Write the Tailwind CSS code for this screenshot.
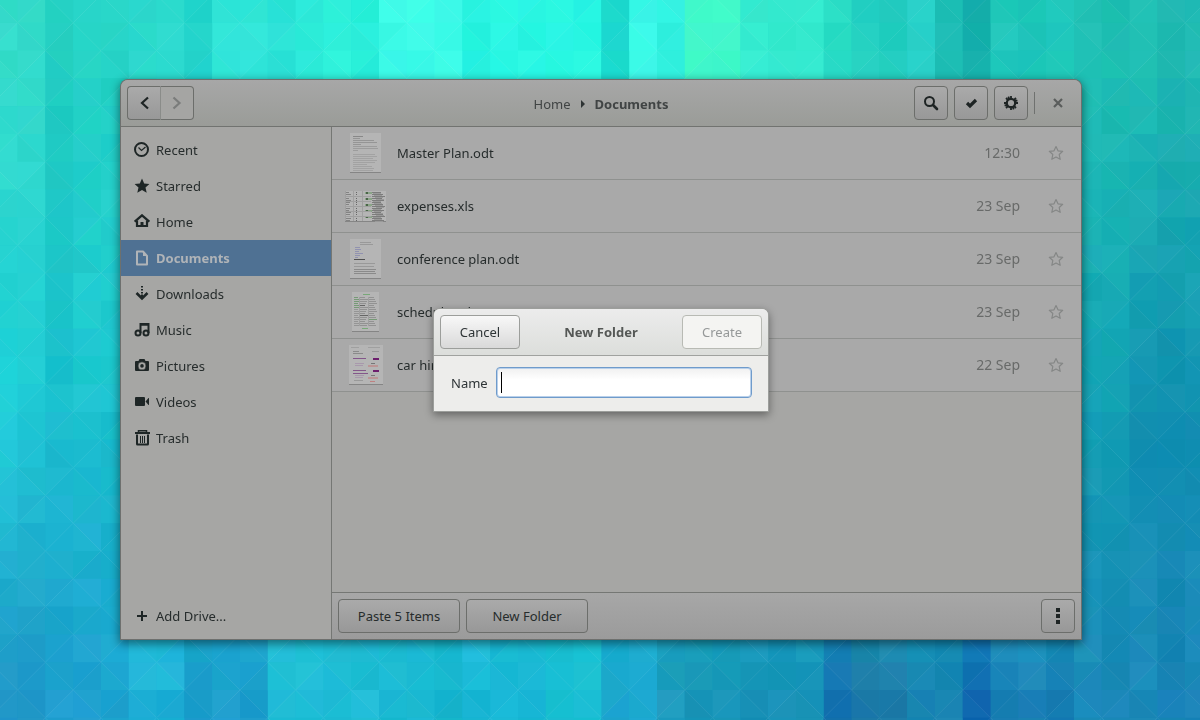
<!DOCTYPE html>
<html lang="en">

<head>
    <meta charset="UTF-8">
    <meta name="viewport" content="width=device-width, initial-scale=1.0">
    <title>Documents</title>
    <script src="https://cdn.jsdelivr.net/npm/@tailwindcss/browser@4"></script>
</head>

<body class="bg-[#1fb8cc] font-['Noto_Sans','Open_Sans',sans-serif] text-[13px] leading-5 text-[#262c2c]">
    <!-- wallpaper, filled in by drawWallpaper() -->
    <svg id="wallpaper" class="fixed inset-0 w-full h-full -z-10" viewBox="0 0 1200 720" preserveAspectRatio="xMidYMid slice" aria-hidden="true"></svg>

    <main class="min-h-screen flex pt-20 pb-[81px] pl-[121px] pr-[119px]">
        <div class="relative flex-1 flex flex-col rounded-t-[7px] bg-[#a6a6a4] shadow-[0_0_0_1px_#6e706e,0_3px_10px_2px_rgba(0,0,0,0.45)]">

            <header class="grid grid-cols-[1fr_auto_1fr] items-center p-1.5 rounded-t-[7px] border-b border-[#717370] bg-linear-to-b from-[#a7a7a7] to-[#9a9c98]">
                <div class="flex">
                    <button type="button" aria-label="Back" class="w-[34px] h-[34px] flex items-center justify-center rounded-l border border-[#6c6e6b] border-r-[#8a8c89] bg-linear-to-b from-[#aaaaaa] to-[#989898]">
                        <svg class="w-4 h-4" viewBox="0 0 16 16" fill="none" stroke="#1e2424" stroke-width="2.2"><path d="M12 2.500 6 8l6 5.500" /></svg>
                    </button>
                    <button type="button" aria-label="Forward" disabled class="w-[33px] h-[34px] flex items-center justify-center rounded-r border border-l-0 border-[#6c6e6b] bg-[#a5a5a3]">
                        <svg class="w-4 h-4" viewBox="0 0 16 16" fill="none" stroke="#7a7c7b" stroke-width="2.2"><path d="m4.500 2.500 6 5.500-6 5.500" /></svg>
                    </button>
                </div>
                <nav class="flex items-center gap-2 pt-0.5 text-[#404444]">
                    <a href="#">Home</a>
                    <svg class="w-2 h-2" viewBox="0 0 8 8" fill="#2e3434"><path d="M2 0v8l4-4z" /></svg>
                    <a href="#" class="font-bold">Documents</a>
                </nav>
                <div class="flex items-center justify-end gap-1.5">
                    <button type="button" aria-label="Search" class="w-[34px] h-[34px] flex items-center justify-center rounded border border-[#6c6e6b] bg-linear-to-b from-[#aaaaaa] to-[#989898]">
                        <svg class="w-4 h-4" viewBox="0 0 16 16" fill="none" stroke="#1e2424"><circle cx="6.500" cy="6.500" r="4.500" stroke-width="2" /><path d="m10 10 4 4" stroke-width="2.600" stroke-linecap="round" /></svg>
                    </button>
                    <button type="button" aria-label="Select" class="w-[34px] h-[34px] flex items-center justify-center rounded border border-[#6c6e6b] bg-linear-to-b from-[#aaaaaa] to-[#989898]">
                        <svg class="w-4 h-4" viewBox="0 0 16 16" fill="none" stroke="#1e2424" stroke-width="3.200"><path d="m4 8 3 3 6-6" /></svg>
                    </button>
                    <button type="button" aria-label="Settings" class="w-[34px] h-[34px] flex items-center justify-center rounded border border-[#6c6e6b] bg-linear-to-b from-[#aaaaaa] to-[#989898]">
                        <svg class="w-4 h-4" viewBox="0 0 16 16" fill="none" stroke="#1e2424"><circle cx="8" cy="8" r="4.200" stroke-width="2.200" /><path d="M8 1v3M8 12v3M1 8h3M12 8h3M3 3l2 2M11 11l2 2M13 3l-2 2M5 11l-2 2M5.300 1.600l.9 2.200M9.800 12.200l.9 2.200M1.600 10.700l2.200-.9M12.200 6.200l2.200-.9" stroke-width="1.800" /></svg>
                    </button>
                    <span class="w-px h-[22px] bg-[#6f716f]"></span>
                    <button type="button" aria-label="Close" class="w-[34px] h-[34px] flex items-center justify-center">
                        <svg class="w-4 h-4" viewBox="0 0 16 16" fill="none" stroke="#5a5d5c" stroke-width="2.200"><path d="m4 4 8 8M12 4l-8 8" /></svg>
                    </button>
                </div>
            </header>

            <div class="flex-1 flex">
                <aside class="w-[211px] flex flex-col py-[5px] border-r border-[#757774]">
                    <a href="#" class="h-9 flex items-center gap-1.5 pl-[13px]">
                        <svg class="w-4 h-4" viewBox="0 0 16 16" fill="none" stroke="#1e2626"><circle cx="7.500" cy="7.500" r="6.500" stroke-width="2" /><path d="m4.500 5.500 3 3 4-3.500" stroke-width="1.200" /></svg>
                        Recent
                    </a>
                    <a href="#" class="h-9 flex items-center gap-1.5 pl-[13px]">
                        <svg class="w-4 h-4" viewBox="0 0 16 16" fill="#1e2626"><path d="m8 .500 2.200 4.900 5.200.5-3.900 3.500L12.700 14.800 8 12l-4.700 2.800 1.200-5.400L.600 5.900l5.200-.5z" /></svg>
                        Starred
                    </a>
                    <a href="#" class="h-9 flex items-center gap-1.5 pl-[13px]">
                        <svg class="w-4 h-4" viewBox="0 0 16 16" fill="none" stroke="#1e2626" stroke-width="2.200"><path d="M.7 7.700 8 1.300l7.300 6.400" /><path d="M3 6.500V12h10V6.500" /><path d="M8 12V8" stroke-width="3" /></svg>
                        Home
                    </a>
                    <a href="#" class="h-9 flex items-center gap-1.5 pl-[13px] bg-[#4f7193] font-bold text-[#b0b4b8]">
                        <svg class="w-4 h-4" viewBox="0 0 16 16" fill="none" stroke="#b0b4b8" stroke-width="2"><path d="M3 1.500h6L13 6v8.500H3z" stroke-linejoin="round" /><path d="M9 1v5h4.500L9.500 1.500z" fill="#b0b4b8" stroke="none" /></svg>
                        Documents
                    </a>
                    <a href="#" class="h-9 flex items-center gap-1.5 pl-[13px]">
                        <svg class="w-4 h-4" viewBox="0 0 16 16" fill="none" stroke="#1e2626" stroke-width="2"><path d="M8 0v8" stroke-dasharray="1.500 1.500" /><path d="M8 8.500V12" /><path d="M2.500 7 8 12.500 13.500 7" stroke-width="2.600" /></svg>
                        Downloads
                    </a>
                    <a href="#" class="h-9 flex items-center gap-1.5 pl-[13px]">
                        <svg class="w-4 h-4" viewBox="0 0 16 16" fill="none" stroke="#1e2626" stroke-width="2"><circle cx="4" cy="11" r="2.500" /><circle cx="12" cy="11" r="2.500" /><path d="M6.500 11V2h8v9" /><path d="M6 2.500h9" stroke-width="2.500" /></svg>
                        Music
                    </a>
                    <a href="#" class="h-9 flex items-center gap-1.5 pl-[13px]">
                        <svg class="w-4 h-4" viewBox="0 0 16 16" fill="#1e2626"><path fill-rule="evenodd" d="M5.500 1h5l1 2H14q1 0 1 1v8q0 1-1 1H2q-1 0-1-1V4q0-1 1-1h2.500zM8 3.800a4.100 4.100 0 1 0 0 8.200 4.100 4.100 0 0 0 0-8.200zM8 5.300a2.600 2.600 0 1 1 0 5.200 2.600 2.600 0 0 1 0-5.200z" /><circle cx="8" cy="7.900" r="4.400" /><circle cx="8" cy="7.900" r="2.700" fill="none" stroke="#a6a6a4" stroke-width="1.800" /></svg>
                        Pictures
                    </a>
                    <a href="#" class="h-9 flex items-center gap-1.5 pl-[13px]">
                        <svg class="w-4 h-4" viewBox="0 0 16 16" fill="#1e2626"><rect x="1" y="3" width="10" height="9" rx="1" /><path d="m11.500 7.500 3-3.500h.5v7h-.5z" /></svg>
                        Videos
                    </a>
                    <a href="#" class="h-9 flex items-center gap-1.5 pl-[13px]">
                        <svg class="w-4 h-4" viewBox="0 0 16 16" fill="none" stroke="#1e2626"><path d="M1 3h15" stroke-width="2" /><path d="M4.500 3V.7h8V3" stroke-width="1.500" /><path d="M3 4.500V14q0 .500.500.500h10q.500 0 .500-.500V4.500" stroke-width="2" /><path d="M6.500 6v7M8.500 6v7M10.500 6v7" /></svg>
                        Trash
                    </a>
                    <a href="#" class="h-9 flex items-center gap-1.5 pl-[13px] mt-auto">
                        <svg class="w-4 h-4" viewBox="0 0 16 16" fill="none" stroke="#1e2626" stroke-width="2"><path d="M8 3v10M3 8h10" /></svg>
                        Add Drive...
                    </a>
                </aside>

                <section class="flex-1 flex flex-col">
                    <ul id="files" class="flex-1"></ul>
                    <footer class="flex gap-1.5 p-1.5 border-t border-[#757774] bg-linear-to-b from-[#a7a7a7] to-[#9b9b9b]">
                        <button type="button" class="w-[122px] h-[34px] rounded border border-[#6c6e6b] bg-linear-to-b from-[#aaaaaa] to-[#989898]">Paste 5 Items</button>
                        <button type="button" class="w-[122px] h-[34px] rounded border border-[#6c6e6b] bg-linear-to-b from-[#aaaaaa] to-[#989898]">New Folder</button>
                        <button type="button" aria-label="More" class="w-[34px] h-[34px] ml-auto flex items-center justify-center rounded border border-[#6c6e6b] bg-linear-to-b from-[#aaaaaa] to-[#989898]">
                            <svg class="w-4 h-4" viewBox="0 0 16 16" fill="#1e2424"><path d="M6 0h4v4H6zM6 6h4v4H6zM6 12h4v4H6z" /></svg>
                        </button>
                    </footer>
                </section>
            </div>

            <div class="absolute inset-0 pt-px flex items-center justify-center">
                <form role="dialog" aria-labelledby="dialogTitle" class="w-[334px] rounded-t-md bg-[#ededeb] shadow-[0_0_0_1px_#9c9e9b,0_3px_8px_1px_rgba(0,0,0,0.4)]">
                    <div class="flex items-center justify-between p-1.5 rounded-t-md border-b border-[#a0a29f] bg-linear-to-b from-[#ececec] to-[#dcdedb]">
                        <button type="button" class="w-20 h-[34px] rounded border border-[#9c9e9b] bg-linear-to-b from-[#f8f8f8] to-[#d9d9d9] text-[#2e3436]">Cancel</button>
                        <h1 id="dialogTitle" class="font-bold text-[#555856]">New Folder</h1>
                        <button type="submit" disabled class="w-20 h-[34px] rounded border border-[#b8bab4] bg-[#f4f4f2] text-[#959898]">Create</button>
                    </div>
                    <div class="flex items-center gap-2 pt-[11px] pb-[13px] pl-[17px] pr-4">
                        <label for="folderName" class="text-[#2e3436]">Name</label>
                        <div class="relative flex-1 flex">
                            <input id="folderName" type="text" class="w-full h-[31px] px-1 rounded border border-[#6f9bcb] bg-linear-to-b from-[#f0f0f0] to-white to-40% shadow-[inset_0_0_0_1px_#b9d0ea] outline-none caret-transparent">
                            <span class="absolute left-[5px] top-[5px] w-px h-[21px] bg-black"></span>
                        </div>
                    </div>
                </form>
            </div>
        </div>
    </main>

    <script>
        // page previews, one per file
        function textLines(x, y, widths, step, color) {
            return widths.map((w, i) => `<rect x="${x}" y="${y + i * step}" width="${w}" height="1" fill="${color}"/>`).join('');
        }
        function page(w, h, inner) {
            return `<svg width="${w}" height="${h}" viewBox="0 0 ${w} ${h}"><rect width="${w}" height="${h}" fill="#858585"/><rect width="${w}" height="${h - 1}" fill="#b5b5b5"/>${inner}</svg>`;
        }
        function planPreview() {
            return page(31, 40,
                textLines(3, 3, [10], 2, '#888') +
                textLines(3, 5, [7, 21, 24, 8], 2, '#959595') +
                textLines(3, 13, [24, 25, 5], 2, '#9c9c9c') +
                textLines(3, 21, [22, 24, 20, 24, 22, 14, 19, 21, 20], 2, '#a2a2a2'));
        }
        function sheetPreview() {
            let s = '';
            for (let i = 0; i < 15; i++) {
                const y = i * 2 + 1;
                s += `<rect x="1" y="${y}" width="${3 + i * 5 % 3}" height="1" fill="#828282"/>`;
                s += `<rect x="11" y="${y}" width="1" height="1" fill="#666"/>`;
                s += `<rect x="27" y="${y}" width="${9 + i * 7 % 5}" height="1" fill="#7c7c7c"/>`;
                s += `<rect x="${28 + i % 4}" y="${y + 1}" width="8" height="1" fill="#999"/>`;
                if (i % 3 === 0) s += `<rect x="20" y="${y}" width="7" height="2" fill="#8aa587"/><rect x="21" y="${y}" width="2" height="2" fill="#4a6348"/>`;
            }
            return page(41, 31, s + '<path d="M.5 0v30M8.500 0v30M17.500 0v30M0 5.500h26M0 10.500h26M0 15.500h26M0 20.500h26M0 25.500h26" stroke="#a0a0a0" fill="none"/>');
        }
        function conferencePreview() {
            return page(31, 40,
                textLines(10, 3, [11, 13], 2, '#999') +
                textLines(5, 8, [5, 6, 4, 8, 5, 3], 2, '#9192b0') +
                textLines(4, 20, [11], 2, '#505050') +
                textLines(4, 24, [21], 2, '#999') +
                textLines(4, 27, [20], 2, '#999') +
                textLines(4, 30, [22, 21, 22], 2, '#8a8a8a'));
        }
        function schedulePreview() {
            let s = '<rect x="11" y="2" width="7" height="1" fill="#78a878"/>';
            for (let i = 0; i < 15; i++) {
                s += `<rect x="2" y="${5 + i * 2}" width="${4 + i % 3}" height="1" fill="${i < 6 ? '#769a76' : '#959595'}"/>`;
                s += `<rect x="8" y="${5 + i * 2}" width="${5 + i * 3 % 4}" height="1" fill="${i === 4 || i === 9 ? '#666' : '#929292'}"/>`;
                s += `<rect x="17" y="${5 + i * 2}" width="${5 + i * 5 % 4}" height="1" fill="${i === 11 ? '#769a76' : '#929292'}"/>`;
            }
            return page(27, 40, s + '<path d="M7.500 5v29M16.500 5v29" stroke="#a0a0a0"/><rect x="10" y="36" width="6" height="1" fill="#78a878"/>');
        }
        function carPreview() {
            let s = textLines(2, 2, [8], 2, '#a0a0a0') + textLines(19, 2, [12], 2, '#a0a0a0') + textLines(4, 6, [6, 10], 2, '#8a8a8a') + textLines(23, 6, [7], 2, '#999');
            [13, 25].forEach(y => {
                s += `<rect x="4" y="${y}" width="13" height="1" fill="#83568a"/><rect x="24" y="${y}" width="6" height="2" fill="#6d1e6d"/>`;
                s += `<rect x="22" y="${y + 5}" width="4" height="1" fill="#777"/><rect x="19" y="${y + 7}" width="10" height="2" fill="#bb9595"/>`;
                s += textLines(6, y + 5, [9, 8], 2, '#a898ac');
            });
            return page(34, 40, s + '<rect x="4" y="28" width="15" height="1" fill="#83568a"/>' + textLines(5, 35, [9], 2, '#999') + '<rect x="21" y="36" width="5" height="1" fill="#c08080"/>');
        }

        const files = [
            { name: 'Master Plan.odt', date: '12:30', preview: planPreview() },
            { name: 'expenses.xls', date: '23 Sep', preview: sheetPreview() },
            { name: 'conference plan.odt', date: '23 Sep', preview: conferencePreview() },
            { name: 'schedule.odt', date: '23 Sep', preview: schedulePreview() },
            { name: 'car hire.odt', date: '22 Sep', preview: carPreview() }
        ];
        document.getElementById('files').innerHTML = files.map(file => `
            <li class="h-[53px] flex items-center pl-3 pr-[17px] border-b border-[#8f918f] bg-[#a9a9a9]">
                <span class="w-[43px] flex justify-center">${file.preview}</span>
                <span class="flex-1 pl-[10px]">${file.name}</span>
                <span class="text-sm text-[#686a69]">${file.date}</span>
                <button type="button" aria-label="Star ${file.name}" class="ml-7">
                    <svg class="w-4 h-4" viewBox="0 0 16 16" fill="none" stroke="#858786" stroke-width="1.200" stroke-linejoin="round"><path d="m8 1.500 2 4.300 4.700.5-3.500 3.200 1 4.800L8 12l-4.200 2.300 1-4.800L1.300 6.300 6 5.800z" /></svg>
                </button>
            </li>`).join('');

        // wallpaper: columns of square cells, a colour holds until the next listed column
        const topRow = { 0: '#35dccb', 2: '#21cdc0', 3: '#25d3c6', 5: '#2ad8cc', 7: '#20d2ca', 8: '#2fe4d8', 10: '#2ce3d8', 11: '#2ae9d8', 12: '#31f2dc', 13: '#26ecd9', 14: '#3dfbe8', 17: '#28f5e2', 22: '#1cd9ce', 23: '#39f7e7', 24: '#30f0e0', 25: '#41f8cb', 27: '#36ecd0', 30: '#27dcc4', 31: '#23cec0', 33: '#28d0c8', 34: '#1dbdb5', 35: '#17b1ad', 36: '#20c8bc', 39: '#20c0b4', 42: '#1fb9b2' };
        const midRow = { 0: '#20d3da', 1: '#20cdd6', 2: '#18bfcc', 3: '#1cc6d0', 39: '#12a2b4', 41: '#1092b0' };
        const lowRow = { 0: '#2298ca', 2: '#1f9fd0', 4: '#1ea5d2', 5: '#1fb2d8', 7: '#1b9dcc', 10: '#20bdd6', 14: '#18b6cf', 17: '#1cbad8', 20: '#1ac0d4', 22: '#1aa6cf', 24: '#1a98ba', 27: '#1690b6', 30: '#116eac', 31: '#1a78a6', 33: '#1682b0', 35: '#1068b0', 36: '#1a80b6', 39: '#1a88b8', 42: '#1782b6' };

        function pick(row, col) {
            while (!row[col]) col--;
            return [1, 3, 5].map(i => parseInt(row[col].slice(i, i + 2), 16));
        }
        function noise(a, b) {
            const n = Math.sin(a * 127.1 + b * 311.7) * 43758.5453;
            return n - Math.floor(n) - 0.5;
        }
        function drawWallpaper() {
            const size = 27.8;
            let cells = '';
            for (let c = 0; c < 44; c++) {
                for (let r = 0; r < 27; r++) {
                    const x = c * size - 10.2;
                    const y = r * size - 5;
                    const t = Math.max(0, (r - 2) / 23);
                    const from = t < 0.5 ? pick(topRow, c) : pick(midRow, c);
                    const to = t < 0.5 ? pick(midRow, c) : pick(lowRow, c);
                    const k = t < 0.5 ? t * 2 : (t - 0.5) * 2;
                    const light = noise(c, Math.floor(r / 5)) * 8 * t + noise(c, r) * 6;
                    const shade = side => 'rgb(' + from.map((v, i) => Math.round(v + (to[i] - v) * Math.min(k, 1) + light + noise(c + side * 57, r + i) * 6)).join(',') + ')';
                    cells += `<rect x="${x}" y="${y}" width="${size + 0.5}" height="${size + 0.5}" fill="${shade(0)}"/>`;
                    // diagonals alternate so that four cells make a diamond
                    const down = (c + r) % 2 === 0;
                    const x2 = x + size, y2 = y + size;
                    cells += `<path d="M${x} ${down ? y : y2}L${x2} ${down ? y2 : y}V${y2}H${x}z" fill="${shade(1)}"/>`;
                    cells += `<path d="M${x} ${down ? y : y2}L${x2} ${down ? y2 : y}" stroke="#fff" stroke-opacity="0.1" stroke-width="0.8"/>`;
                }
            }
            document.getElementById('wallpaper').innerHTML = cells;
        }
        drawWallpaper();
    </script>
</body>

</html>
